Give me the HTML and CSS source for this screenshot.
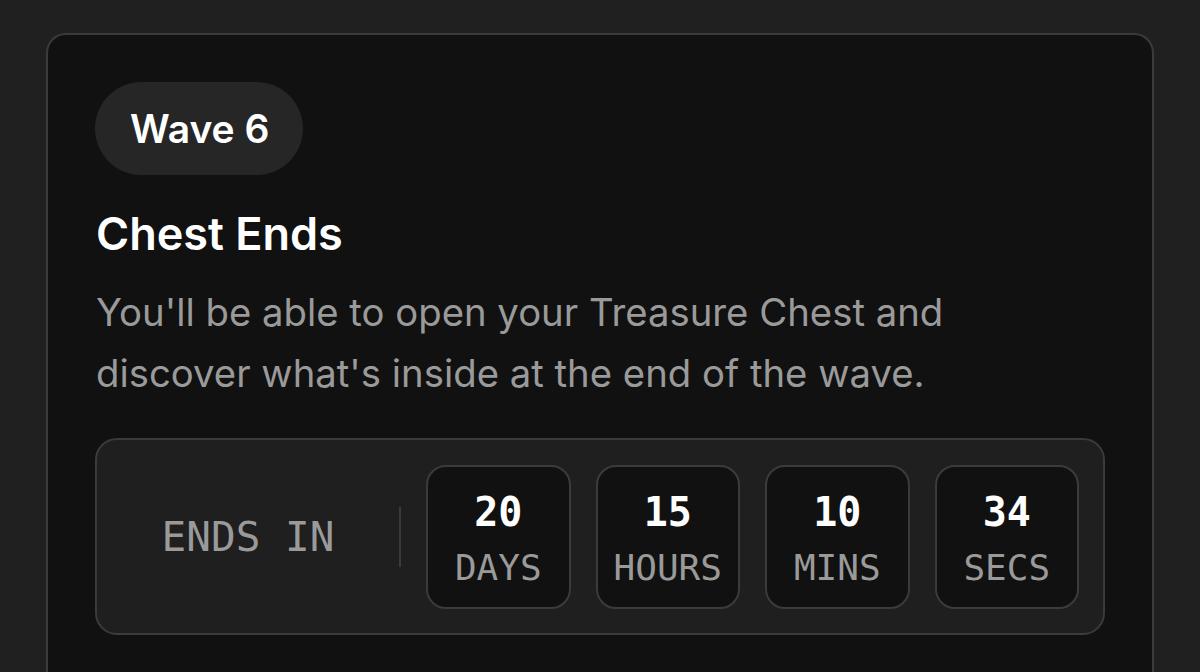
FILE: index.html
```html
<!DOCTYPE html>
<html lang="en">
<head>
  <meta charset="UTF-8" />
  <meta name="viewport" content="width=device-width, initial-scale=1.0" />
  <title>Wave 6</title>
  <link rel="stylesheet" href="styles.css">
</head>
<body>
  <section class="chest-card">
    <span class="wave-pill">Wave 6</span>
    <h2>Chest Ends</h2>
    <p class="chest-desc">You'll be able to open your Treasure Chest and discover what's inside at the end of the wave.</p>

    <div class="countdown">
      <div class="countdown-label">ENDS IN</div>
      <div class="countdown-divider"></div>
      <div class="countdown-units">
        <div class="unit">
          <span class="unit-value">20</span>
          <span class="unit-name">DAYS</span>
        </div>
        <div class="unit">
          <span class="unit-value">15</span>
          <span class="unit-name">HOURS</span>
        </div>
        <div class="unit">
          <span class="unit-value">10</span>
          <span class="unit-name">MINS</span>
        </div>
        <div class="unit">
          <span class="unit-value">34</span>
          <span class="unit-name">SECS</span>
        </div>
      </div>
    </div>
  </section>
</body>
</html>
```

FILE: styles.css
```css
:root {
  --page-bg: #202020;
  --card-bg: #111111;
  --panel-bg: #1f1f1f;
  --pill-bg: #262626;
  --border: #3b3b3b;
  --text: #ffffff;
  --muted: #9a9a9a;
}

body {
  margin: 0;
  padding: 33px 46px 0;
  background-color: var(--page-bg);
  color: var(--text);
  font-family: Inter, 'Noto Sans', sans-serif;
  height: 672px;
  box-sizing: border-box;
  overflow: hidden;
}

.chest-card {
  background-color: var(--card-bg);
  border: 2px solid var(--border);
  border-bottom: none;
  border-radius: 20px 20px 0 0;
  padding: 47px 48px 0;
  height: 100%;
  box-sizing: border-box;
}

.wave-pill {
  display: inline-flex;
  align-items: center;
  height: 93px;
  padding: 0 34px 0 35px;
  box-sizing: border-box;
  border-radius: 47px;
  background-color: var(--pill-bg);
  font-size: 39px;
  font-weight: 600;
  margin-left: -1px;
}

h2 {
  margin: 32px 0 0;
  font-size: 45px;
  font-weight: 600;
  line-height: 1.2;
}

.chest-desc {
  margin: 21px 0 0;
  max-width: 880px;
  font-size: 38.3px;
  line-height: 61px;
  color: var(--muted);
}

.countdown {
  display: flex;
  align-items: center;
  margin: 34px -1px 0;
  padding: 25px 24px 24px 0;
  background-color: var(--panel-bg);
  border: 2px solid var(--border);
  border-radius: 22px;
  font-family: 'DejaVu Sans Mono', 'Liberation Mono', monospace;
}

.countdown-label {
  flex: 1;
  text-align: center;
  font-size: 41px;
  color: var(--muted);
}

.countdown-divider {
  width: 2px;
  height: 60px;
  background-color: var(--border);
  margin-right: 25px;
}

.countdown-units {
  display: flex;
  gap: 25px;
}

.unit {
  width: 144.5px;
  height: 144px;
  box-sizing: border-box;
  display: flex;
  flex-direction: column;
  align-items: center;
  justify-content: center;
  gap: 18px;
  padding-top: 4px;
  background-color: var(--card-bg);
  border: 2px solid var(--border);
  border-radius: 20px;
}

.unit-value {
  font-size: 40px;
  font-weight: 700;
  line-height: 1;
}

.unit-name {
  font-size: 36px;
  line-height: 1;
  color: var(--muted);
}
```
